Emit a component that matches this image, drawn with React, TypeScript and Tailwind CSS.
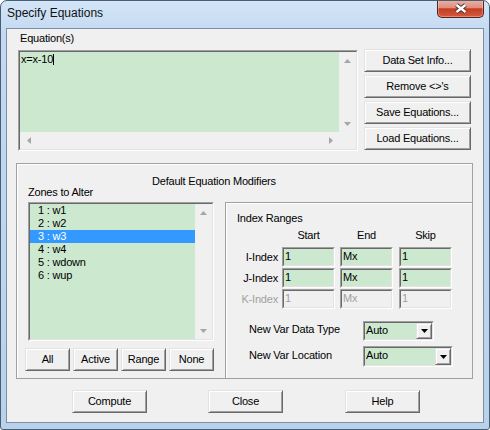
import type { ReactNode } from 'react';

type BoxProps = {
  className?: string;
  inner?: string;
  children?: ReactNode;
};

// sunken 3D edge (edit, list, combo)
const Sunken = ({ className = '', inner = '', children }: BoxProps) => (
  <div
    className={`border border-t-[#a0a0a0] border-l-[#a0a0a0] border-r-white border-b-white ${className}`}
  >
    <div
      className={`h-full border border-t-[#696969] border-l-[#696969] border-r-[#e3e3e3] border-b-[#e3e3e3] ${inner}`}
    >
      {children}
    </div>
  </div>
);

type BtnProps = {
  label?: ReactNode;
  className?: string;
};

const Button = ({ label, className = '' }: BtnProps) => (
  <div
    className={`flex items-center justify-center bg-[#f0f0f0] border border-t-[#e3e3e3] border-l-[#e3e3e3] border-b-[#696969] border-r-[#696969] shadow-[inset_1px_1px_0_#ffffff,inset_-1px_-1px_0_#a0a0a0] ${className}`}
  >
    {label}
  </div>
);

type Dir = 'up' | 'down' | 'left' | 'right';

const Tri = ({ dir, color = '#a6a6a6' }: { dir: Dir; color?: string }) => {
  const vertical = dir === 'up' || dir === 'down';
  const points = {
    up: '0,4 7,4 3.5,0',
    down: '0,0 7,0 3.5,4',
    left: '4,0 4,7 0,3.5',
    right: '0,0 0,7 4,3.5',
  }[dir];
  return (
    <svg width={vertical ? 7 : 4} height={vertical ? 4 : 7}>
      <polygon points={points} fill={color} />
    </svg>
  );
};

const VScroll = () => (
  <div className="w-[17px] h-full bg-[#f0f0f0] flex flex-col justify-between">
    <div className="h-[17px] flex items-center justify-center">
      <Tri dir="up" />
    </div>
    <div className="h-[17px] flex items-center justify-center">
      <Tri dir="down" />
    </div>
  </div>
);

const HScroll = () => (
  <div className="flex-1 h-full bg-[#f0f0f0] flex justify-between">
    <div className="w-[17px] flex items-center justify-center">
      <Tri dir="left" />
    </div>
    <div className="w-[17px] flex items-center justify-center">
      <Tri dir="right" />
    </div>
  </div>
);

const Field = ({ value, disabled, className = '' }: { value: string; disabled?: boolean; className?: string }) => (
  <Sunken
    className={`w-[53px] h-[20px] ${className}`}
    inner={`pl-[1px] pt-[1px] ${disabled ? 'bg-[#f0f0f0] text-[#a0a0a0]' : 'bg-[#cce8cf]'}`}
  >
    {value}
  </Sunken>
);

const Combo = ({ className = '' }: { className?: string }) => (
  <Sunken className={className} inner="flex bg-[#cce8cf]">
    <div className="flex-1 pl-[1px] pt-[1px]">Auto</div>
    <Button className="w-[16px] h-full" label={<Tri dir="down" color="#000" />} />
  </Sunken>
);

const CloseButton = () => (
  <div className="-mt-[1px] w-[47px] h-[18px] rounded-b-[5px] border border-t-0 border-[#5b2018] bg-[linear-gradient(to_bottom,#eab3a6_0%,#de8e7c_45%,#c63c22_52%,#d35a3e_100%)] shadow-[inset_0_0_0_1px_rgba(255,255,255,0.3)] flex items-center justify-center">
    <svg width="14" height="11" viewBox="0 0 14 11">
      <path d="M2.5 2 L11.5 9 M11.5 2 L2.5 9" stroke="#473230" strokeWidth="4.2" />
      <path d="M2.5 2 L11.5 9 M11.5 2 L2.5 9" stroke="#ffffff" strokeWidth="2.4" />
    </svg>
  </div>
);

const zones = ['1 : w1', '2 : w2', '3 : w3', '4 : w4', '5 : wdown', '6 : wup'];

const indexRows = [
  { label: 'I-Index', disabled: false },
  { label: 'J-Index', disabled: false },
  { label: 'K-Index', disabled: true },
];

export default function App() {
  return (
    <div className="w-[490px] h-[430px] flex flex-col border border-[#4a5d73] rounded-t-[7px] rounded-b-[3px] bg-[linear-gradient(to_bottom,#d3e5f8_0%,#c2d9f1_8%,#b9d2ec_100%)] px-[5px] pb-[6px] font-['Liberation_Sans',Arial,sans-serif] overflow-hidden">
      {/* title bar */}
      <div className="h-[27px] shrink-0 flex justify-between">
        <div className="ml-[1px] mt-[5px] text-[12px] leading-[15px] text-[#111]">Specify Equations</div>
        <CloseButton />
      </div>

      {/* client */}
      <div className="flex-1 flex flex-col border border-[#7b8ea4] bg-[#f0f0f0] text-[11px] leading-[13px] tracking-[-0.2px] text-black">
        <div className="ml-[13px] mt-[3px] h-[13px]">Equation(s)</div>

        <div className="flex mt-[4px] ml-[11px]">
          <Sunken className="mt-[1px] w-[340px] h-[101px]" inner="flex flex-col">
            <div className="flex flex-1 min-h-0">
              <div className="flex-1 bg-[#cce8cf] pl-[1px] pt-[1px] flex items-start">
                <span>x=x-10</span>
                <span className="mt-[1px] w-[1px] h-[11px] bg-black" />
              </div>
              <VScroll />
            </div>
            <div className="flex h-[17px]">
              <HScroll />
              <div className="w-[17px] bg-[#f0f0f0]" />
            </div>
          </Sunken>
          <div className="ml-[6px] flex flex-col gap-[3px]">
            <Button className="w-[107px] h-[23px]" label="Data Set Info..." />
            <Button className="w-[107px] h-[23px]" label="Remove <>'s" />
            <Button className="w-[107px] h-[23px]" label="Save Equations..." />
            <Button className="w-[107px] h-[23px]" label="Load Equations..." />
          </div>
        </div>

        {/* Default Equation Modifiers group */}
        <div className="mt-[12px] ml-[9px] w-[457px] h-[216px] flex flex-col border border-[#a0a0a0] shadow-[inset_1px_1px_0_#ffffff]">
          <div className="ml-[135px] mt-[11px] h-[11px]">Default Equation Modifiers</div>
          <div className="flex flex-1">
            <div className="ml-[8px] w-[189px] flex flex-col">
              <div className="ml-[3px] h-[13px]">Zones to Alter</div>
              <Sunken className="ml-[3px] mt-[3px] w-[186px] h-[139px]" inner="flex">
                <div className="flex-1 bg-[#cce8cf]">
                  {zones.map((z, i) => (
                    <div
                      key={z}
                      className={`h-[13px] pl-[8px] ${i === 2 ? 'bg-[#3399ff] text-white' : ''}`}
                    >
                      {z}
                    </div>
                  ))}
                </div>
                <VScroll />
              </Sunken>
              <div className="flex gap-[3px] mt-[7px]">
                {['All', 'Active', 'Range', 'None'].map((b) => (
                  <Button key={b} className="w-[45px] h-[23px]" label={b} />
                ))}
              </div>
            </div>

            <div className="ml-[11px] mt-[16px] flex-1 flex flex-col border-t border-l border-[#a0a0a0] shadow-[inset_1px_1px_0_#ffffff]">
              <div className="ml-[11px] mt-[9px]">Index Ranges</div>
              <div className="flex mt-[4px] h-[13px]">
                <div className="w-[56px]" />
                <div className="w-[53px] text-center">Start</div>
                <div className="ml-[5px] w-[53px] text-center">End</div>
                <div className="ml-[6px] w-[53px] text-center">Skip</div>
              </div>
              <div className="mt-[5px] flex flex-col gap-[1px]">
                {indexRows.map((r) => (
                  <div key={r.label} className="flex items-center h-[20px]">
                    <div className={`w-[52px] text-right ${r.disabled ? 'text-[#a0a0a0]' : ''}`}>{r.label}</div>
                    <Field className="ml-[4px]" value="1" disabled={r.disabled} />
                    <Field className="ml-[5px]" value="Mx" disabled={r.disabled} />
                    <Field className="ml-[6px]" value="1" disabled={r.disabled} />
                  </div>
                ))}
              </div>
              <div className="flex items-start mt-[12px] h-[20px]">
                <div className="ml-[23px] w-[114px] mt-[2px]">New Var Data Type</div>
                <Combo className="w-[71px] h-[20px]" />
              </div>
              <div className="flex items-start mt-[5px] h-[21px]">
                <div className="ml-[23px] w-[114px] mt-[3px]">New Var Location</div>
                <Combo className="w-[90px] h-[21px]" />
              </div>
            </div>
          </div>
        </div>

        <div className="flex mt-[11px]">
          <Button className="ml-[65px] w-[75px] h-[23px] border-[#404040] border-t-[#a0a0a0] border-l-[#a0a0a0]" label="Compute" />
          <Button className="ml-[61px] w-[75px] h-[23px]" label="Close" />
          <Button className="ml-[62px] w-[75px] h-[23px]" label="Help" />
        </div>
      </div>
    </div>
  );
}
